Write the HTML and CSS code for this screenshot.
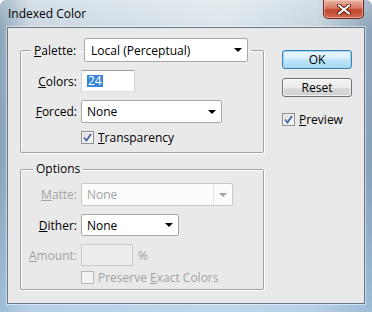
FILE: index.html
```html
<!DOCTYPE html>
<html>

<head>
    <meta name="viewport" content="width=device-width, initial-scale=1">
    <title>Indexed Color</title>
    <link rel="stylesheet" href="styles.css">
</head>

<body>
    <div class="window">
        <div class="titlebar">
            <span class="title">Indexed Color</span>
            <button class="close" type="button">
                <svg width="14" height="11" viewBox="0 0 14 11">
                    <path d="M2 1.5 L12 9.5 M12 1.5 L2 9.5" stroke="#5a1d12" stroke-width="4" stroke-linecap="round" />
                    <path d="M2 1.5 L12 9.5 M12 1.5 L2 9.5" stroke="#fff" stroke-width="2.2" stroke-linecap="round" />
                </svg>
            </button>
        </div>

        <div class="client">
            <div class="left">
                <fieldset class="group palette">
                    <legend class="head">
                        <span class="lbl"><u>P</u>alette:</span>
                        <span class="combo wide">
                            <span class="val">Local (Perceptual)</span>
                            <span class="arrow"></span>
                        </span>
                    </legend>
                    <div class="rows">
                        <span class="lbl"><u>C</u>olors:</span>
                        <span class="field colors"><span class="sel">24</span></span>

                        <span class="lbl"><u>F</u>orced:</span>
                        <span class="combo forced">
                            <span class="val">None</span>
                            <span class="arrow"></span>
                        </span>

                        <span></span>
                        <span class="check">
                            <span class="box on">
                                <svg width="9" height="9" viewBox="0 0 9 9"><path d="M1 4.5 L3.5 7.5 L8 1" fill="none" stroke="#4866a6" stroke-width="1.8" /></svg>
                            </span>
                            <span><u>T</u>ransparency</span>
                        </span>
                    </div>
                </fieldset>

                <fieldset class="group options">
                    <legend class="opt-legend">Options</legend>
                    <div class="rows">
                        <span class="lbl off"><u>M</u>atte:</span>
                        <span class="combo matte disabled">
                            <span class="val">None</span>
                            <span class="sep"></span>
                            <span class="arrow"></span>
                        </span>

                        <span class="lbl"><u>D</u>ither:</span>
                        <span class="combo dither">
                            <span class="val">None</span>
                            <span class="arrow"></span>
                        </span>

                        <span class="lbl off"><u>A</u>mount:</span>
                        <span class="amount">
                            <span class="field disabled"></span>
                            <span class="off">%</span>
                        </span>

                        <span></span>
                        <span class="check off last">
                            <span class="box disabled"></span>
                            <span>Preserve <u>E</u>xact Colors</span>
                        </span>
                    </div>
                </fieldset>
            </div>

            <div class="right">
                <button class="btn default" type="button">OK</button>
                <button class="btn" type="button">Reset</button>
                <span class="check preview">
                    <span class="box on">
                        <svg width="9" height="9" viewBox="0 0 9 9"><path d="M1 4.5 L3.5 7.5 L8 1" fill="none" stroke="#4866a6" stroke-width="1.8" /></svg>
                    </span>
                    <span><u>P</u>review</span>
                </span>
            </div>
        </div>
    </div>
</body>

</html>
```

FILE: styles.css
```css
body {
    margin: 0;
    font-family: "Open Sans", "Noto Sans", sans-serif;
    font-size: 12px;
    color: #000;
}

.window {
    width: 372px;
    height: 312px;
    display: flex;
    flex-direction: column;
    border-radius: 6px 6px 0 0;
    background:
        linear-gradient(to bottom, rgba(255, 255, 255, 0.25), rgba(255, 255, 255, 0) 30px, rgba(120, 150, 180, 0.25) 160px, rgba(170, 205, 235, 0.6) 100%),
        linear-gradient(to right, #8ea6ba, #c8d6e1 8%, #d5dfe7 40%, #dde6ec 60%, #c6d4df 85%, #8aa2b8);
}

.titlebar {
    height: 27px;
    display: flex;
    justify-content: space-between;
    align-items: flex-start;
    padding-left: 8px;
}

.title {
    line-height: 27px;
}

.close {
    width: 41px;
    height: 19px;
    margin-right: 8px;
    padding: 0;
    border: 1px solid #6b2a20;
    border-top: none;
    border-radius: 0 0 5px 5px;
    background: linear-gradient(to bottom, #eab3a4, #d77a64 45%, #c0442b 55%, #cf6a4d);
    box-shadow: inset 0 0 0 1px rgba(255, 220, 210, 0.5);
    display: flex;
    align-items: center;
    justify-content: center;
}

.client {
    flex: 1;
    margin: 0 7px 8px;
    padding: 10px 0 0 12px;
    display: flex;
    background: #e9e9e9;
    border: 1px solid #667685;
    box-shadow: 0 0 0 1px rgba(255, 255, 255, 0.5);
}

.left {
    width: 244px;
}

.group {
    margin: 0;
    padding: 0;
    width: 244px;
    box-sizing: border-box;
    border: 1px solid #a2a2a2;
    border-radius: 2px;
    box-shadow: 1px 1px 0 #fff, inset 1px 1px 0 #fff;
}

.palette {
    padding: 14px 0 9px;
}

.head {
    display: flex;
    align-items: center;
    margin: 0 0 -6px 10px;
    padding: 0 3px;
}

.head .combo {
    margin-left: 8px;
}

.options {
    margin-top: 8px;
    padding: 6px 0 6px;
}

.opt-legend {
    margin-left: 12px;
    padding: 0 3px;
    line-height: 16px;
}

.rows {
    display: grid;
    grid-template-columns: 56px max-content;
    column-gap: 4px;
    row-gap: 8px;
    align-items: center;
}

.lbl {
    text-align: right;
    white-space: nowrap;
}

.off {
    color: #a3a3a3;
}

.combo {
    display: flex;
    align-items: center;
    box-sizing: border-box;
    height: 23px;
    padding-left: 5px;
    background: #fff;
    border: 1px solid #a9a9a9;
    border-radius: 2px;
}

.combo .val {
    flex: 1;
}

.arrow {
    width: 0;
    height: 0;
    margin: 0 5px 0 6px;
    border-left: 4px solid transparent;
    border-right: 4px solid transparent;
    border-top: 4px solid #000;
}

.wide {
    width: 164px;
    height: 24px;
    padding-left: 6px;
}

.forced {
    width: 141px;
}

.matte {
    width: 152px;
}

.dither {
    width: 98px;
    height: 22px;
}

.combo.disabled {
    border-color: #c8c8c8;
    color: #a3a3a3;
    background: #fbfbfb;
}

.combo.disabled .arrow {
    border-top-color: #a0a0a0;
    margin-left: 5px;
}

.sep {
    width: 1px;
    align-self: stretch;
    background: #e2e2e2;
}

.field {
    display: flex;
    align-items: center;
    box-sizing: border-box;
    width: 54px;
    height: 22px;
    padding-left: 5px;
    background: #fff;
    border: 1px solid;
    border-color: #9aa3ad #cfd5dc #dde1e6 #cfd5dc;
}

.field.disabled {
    width: 52px;
    background: #ececec;
    border-color: #c6c9cd;
}

.sel {
    background: #3a86da;
    color: #fff;
    line-height: 12px;
    padding: 0 1px;
}

.amount {
    display: flex;
    align-items: center;
    gap: 5px;
}

.check {
    display: flex;
    align-items: center;
    gap: 4px;
    height: 12px;
    white-space: nowrap;
}

.check.last {
    margin-top: -3px;
}

.box {
    width: 11px;
    height: 11px;
    border: 1px solid #8f8f8f;
    background: linear-gradient(135deg, #dcdcdc, #fbfbfb);
    box-shadow: inset 0 0 0 1px #f4f4f4;
    display: flex;
    align-items: center;
    justify-content: center;
}

.box.disabled {
    border-color: #b9b9b9;
    background: #f3f3f3;
}

.right {
    margin-left: 18px;
    padding-top: 12px;
    display: flex;
    flex-direction: column;
    align-items: flex-start;
}

.btn {
    width: 70px;
    height: 19px;
    padding: 0;
    font: inherit;
    color: #000;
    border: 1px solid #707070;
    border-radius: 3px;
    background: linear-gradient(to bottom, #f3f3f3, #ebebeb 50%, #dcdcdc 50%, #cfcfcf);
    box-shadow: inset 0 0 0 1px rgba(255, 255, 255, 0.7);
}

.btn + .btn {
    margin-top: 9px;
}

.btn.default {
    border-color: #3c7fb1;
    background: linear-gradient(to bottom, #e8f5fc, #d9effb 50%, #bee6fd 50%, #a9d9f2);
    box-shadow: inset 0 0 0 1px #9fd6f5;
}

.preview {
    margin-top: 16px;
    height: 13px;
}
```
